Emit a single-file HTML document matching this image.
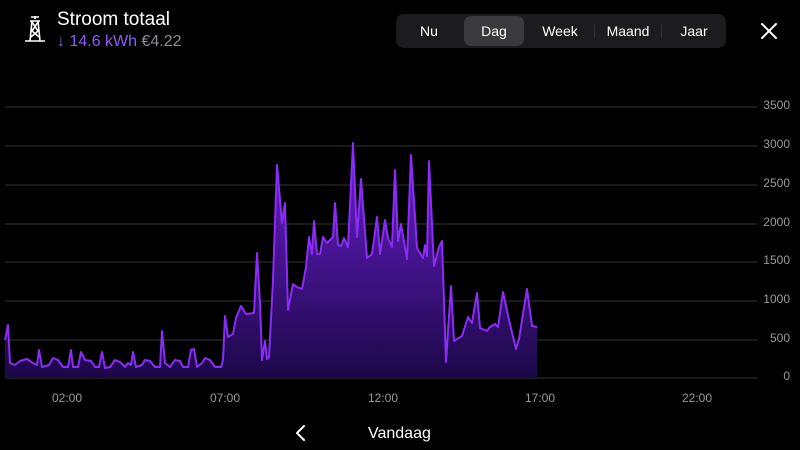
<!DOCTYPE html>
<html><head><meta charset="utf-8"><style>
body{margin:0;width:800px;height:450px;background:#000;overflow:hidden;font-family:"Liberation Sans",sans-serif;position:relative;color:#fff}
.t{position:absolute;left:57px;top:9px;font-size:19px}
.s{position:absolute;left:57px;top:33px;font-size:16px;color:#8d5cf6}
.s span{color:#8e8e93}
.seg{position:absolute;left:396px;top:14px;width:330px;height:34px;background:#1c1c1e;border-radius:8px}
.seg div{position:absolute;top:0;height:34px;line-height:34px;font-size:14px;text-align:center}
.dag{background:#3a3a3c;border-radius:7px;top:2px!important;height:30px!important;line-height:30px!important}
.seg .sep{top:10px;width:1px;height:14px;background:#2e2e30}
.yl{position:absolute;right:10px;font-size:12px;color:#9a9a9a}
.xl{position:absolute;top:391px;font-size:12px;color:#9a9a9a;transform:translateX(-50%)}
</style></head><body>
<svg style="position:absolute;left:22px;top:14px" width="26" height="28" viewBox="0 0 26 28" fill="none" stroke="#fff" stroke-width="1.6">
<path d="M9 3h8M8 7h10M13 2v3M10 7l-2 20M16 7l2 20M10 8l6 9l-7 6M16 8l-6 9l7 6M3 27h20"/></svg>
<div class="t">Stroom totaal</div>
<div class="s"><b>↓</b> 14.6 kWh <span>€4.22</span></div>
<div class="seg">
<div style="left:0;width:66px">Nu</div>
<div class="dag" style="left:68px;width:60px">Dag</div>
<div style="left:130px;width:68px">Week</div>
<div class="sep" style="left:198px"></div>
<div style="left:199px;width:66px">Maand</div>
<div class="sep" style="left:265px"></div>
<div style="left:266px;width:64px">Jaar</div>
</div>
<svg style="position:absolute;left:760px;top:22px" width="18" height="18" viewBox="0 0 18 18" stroke="#fff" stroke-width="2" stroke-linecap="round"><path d="M2 2L16 16M16 2L2 16"/></svg>
<svg style="position:absolute;left:0;top:0" width="800" height="450">
<defs><linearGradient id="g" x1="0" y1="143" x2="0" y2="378" gradientUnits="userSpaceOnUse"><stop offset="0" stop-color="#6a1fd0"/><stop offset="1" stop-color="#1c0848"/></linearGradient></defs>
<g stroke="#2b2b2b" stroke-width="1.2">
<path d="M5 107H757M5 146H757M5 185H757M5 224H757M5 262H757M5 301H757M5 340H757M5 378H757"/></g>
<path fill="url(#g)" d="M5 378L5 340L8 325L10 363L15 365L20 361L27 359L33 363L37 365L39 350L42 367L49 365L53 358L58 360L63 367L68 367L71 350L73 367L78 367L81 352L85 360L91 361L95 367L99 367L102 352L105 368L110 367L115 360L120 362L125 367L128 363L131 365L133 352L136 367L142 365L145 360L150 361L155 367L160 367L162 331L165 363L170 367L175 360L180 361L183 367L188 367L191 350L194 349L197 367L202 363L205 358L210 360L215 367L221 367L223 360L225 316L228 337L233 334L236 318L241 306L246 314L254 313L257 253L260 303L262 360L265 341L267 359L269 357L273 280L277 165L282 223L285 203L288 310L293 284L297 287L302 289L306 267L309 237L312 254L314 221L317 254L320 254L323 237L327 243L333 237L335 203L338 245L341 246L344 238L348 247L353 143L357 237L361 179L367 258L372 254L377 217L380 254L385 220L388 238L392 247L395 170L398 241L401 224L407 259L411 155L417 248L423 258L425 245L427 256L429 161L434 266L439 247L442 241L446 362L451 286L454 341L462 336L468 317L472 323L477 293L480 328L487 331L490 327L495 324L498 327L503 292L509 320L516 349L519 339L527 289L532 326L537 327L537 378Z"/>
<path fill="none" stroke="#8a2cf6" stroke-width="2" stroke-linejoin="round" d="M5 340L8 325L10 363L15 365L20 361L27 359L33 363L37 365L39 350L42 367L49 365L53 358L58 360L63 367L68 367L71 350L73 367L78 367L81 352L85 360L91 361L95 367L99 367L102 352L105 368L110 367L115 360L120 362L125 367L128 363L131 365L133 352L136 367L142 365L145 360L150 361L155 367L160 367L162 331L165 363L170 367L175 360L180 361L183 367L188 367L191 350L194 349L197 367L202 363L205 358L210 360L215 367L221 367L223 360L225 316L228 337L233 334L236 318L241 306L246 314L254 313L257 253L260 303L262 360L265 341L267 359L269 357L273 280L277 165L282 223L285 203L288 310L293 284L297 287L302 289L306 267L309 237L312 254L314 221L317 254L320 254L323 237L327 243L333 237L335 203L338 245L341 246L344 238L348 247L353 143L357 237L361 179L367 258L372 254L377 217L380 254L385 220L388 238L392 247L395 170L398 241L401 224L407 259L411 155L417 248L423 258L425 245L427 256L429 161L434 266L439 247L442 241L446 362L451 286L454 341L462 336L468 317L472 323L477 293L480 328L487 331L490 327L495 324L498 327L503 292L509 320L516 349L519 339L527 289L532 326L537 327"/>
<path d="M304 426L297 433L304 440" fill="none" stroke="#fff" stroke-width="2" stroke-linecap="round" stroke-linejoin="round"/>
</svg>
<div class="yl" style="top:98px">3500</div>
<div class="yl" style="top:137px">3000</div>
<div class="yl" style="top:176px">2500</div>
<div class="yl" style="top:215px">2000</div>
<div class="yl" style="top:253px">1500</div>
<div class="yl" style="top:292px">1000</div>
<div class="yl" style="top:331px">500</div>
<div class="yl" style="top:369px">0</div>
<div class="xl" style="left:67px">02:00</div>
<div class="xl" style="left:225px">07:00</div>
<div class="xl" style="left:383px">12:00</div>
<div class="xl" style="left:540px">17:00</div>
<div class="xl" style="left:697px">22:00</div>
<div style="position:absolute;left:368px;top:425px;font-size:16px">Vandaag</div>
</body></html>
